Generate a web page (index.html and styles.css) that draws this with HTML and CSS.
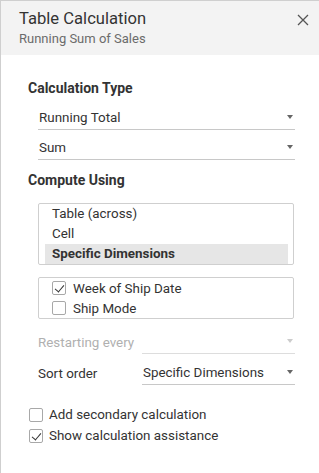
FILE: index.html
```html
<!DOCTYPE html>
<html lang="en">
<head>
    <meta charset="UTF-8">
    <meta name="viewport" content="width=device-width, initial-scale=1.0">
    <title>Table Calculation</title>
    <link rel="stylesheet" href="styles.css">
</head>
<body>
    <div class="panel">
        <div class="header">
            <div class="titles">
                <div class="title">Table Calculation</div>
                <div class="subtitle">Running Sum of Sales</div>
            </div>
            <svg class="close" width="12" height="12" viewBox="0 0 12 12">
                <path d="M1 1 L11 11 M11 1 L1 11" stroke="#555" stroke-width="1.3" fill="none"/>
            </svg>
        </div>

        <div class="body">
            <div class="section-title">Calculation Type</div>
            <div class="select">
                <span>Running Total</span><span class="caret"></span>
            </div>
            <div class="select">
                <span>Sum</span><span class="caret"></span>
            </div>

            <div class="section-title compute">Compute Using</div>
            <ul class="listbox">
                <li>Table (across)</li>
                <li>Cell</li>
                <li class="selected">Specific Dimensions</li>
            </ul>

            <ul class="checklist">
                <li><span class="check on"></span>Week of Ship Date</li>
                <li><span class="check"></span>Ship Mode</li>
            </ul>

            <div class="field-row restart disabled">
                <div class="label">Restarting every</div>
                <div class="select">
                    <span></span><span class="caret"></span>
                </div>
            </div>
            <div class="field-row sort">
                <div class="label">Sort order</div>
                <div class="select">
                    <span>Specific Dimensions</span><span class="caret"></span>
                </div>
            </div>

            <div class="options">
                <div class="option"><span class="check"></span>Add secondary calculation</div>
                <div class="option"><span class="check on"></span>Show calculation assistance</div>
            </div>
        </div>
    </div>
</body>
</html>
```

FILE: styles.css
```css
* {
    box-sizing: border-box;
}
body {
    margin: 0;
    font-family: Roboto, "Liberation Sans", sans-serif;
    font-size: 13.4px;
    color: #333;
    background: #fff;
}
.panel {
    height: 473px;
    border-left: 1px solid #cfcfcf;
    border-top: 1px solid #cfcfcf;
}
.header {
    background-color: #f3f3f3;
    height: 54px;
    display: flex;
    justify-content: space-between;
    padding: 7px 10px 0 18px;
}
.title {
    font-size: 16.6px;
    line-height: 22px;
    color: #333;
}
.subtitle {
    font-size: 13px;
    line-height: 18px;
    color: #6b6b6b;
}
.close {
    margin-top: 6px;
}
.body {
    padding: 23px 24px 0 27px;
}
.section-title {
    font-size: 14px;
    font-weight: bold;
    line-height: 20px;
    margin-bottom: 2px;
}
.compute {
    margin-top: 10px;
}
.select {
    display: flex;
    justify-content: space-between;
    align-items: center;
    margin-left: 10px;
    height: 30px;
    padding: 5px 1px 0 1px;
    border-bottom: 1px solid #c8c8c8;
}
.caret {
    width: 0;
    height: 0;
    border-left: 3.5px solid transparent;
    border-right: 3.5px solid transparent;
    border-top: 4px solid #666;
    margin-right: 1px;
}
ul {
    list-style: none;
    margin: 0;
    padding: 0;
}
.listbox {
    margin: 13px 1px 0 10px;
    border: 1px solid #cfcfcf;
    border-radius: 2px;
    padding: 0 5px 0 6px;
}
.listbox li {
    height: 20px;
    line-height: 20px;
    padding-left: 7px;
}
.listbox .selected {
    background-color: #e6e6e6;
    font-weight: bold;
}
.checklist {
    margin: 12px 1px 0 10px;
    border: 1px solid #cfcfcf;
    border-radius: 2px;
    padding-left: 13px;
}
.checklist li {
    display: flex;
    align-items: center;
    height: 20px;
}
.check {
    width: 14px;
    height: 14px;
    border: 1px solid #a8a8a8;
    border-radius: 2px;
    margin-right: 7px;
    background: #fff;
    position: relative;
    flex-shrink: 0;
}
.check.on::after {
    content: "";
    position: absolute;
    left: 4px;
    top: 1px;
    width: 4px;
    height: 8px;
    border-right: 1.5px solid #333;
    border-bottom: 1.5px solid #333;
    transform: rotate(40deg);
}
.field-row {
    display: flex;
    margin-left: 10px;
}
.restart {
    margin-top: 5px;
}
.sort {
    margin-top: 1px;
}
.field-row .label {
    width: 104px;
    padding-top: 9px;
    line-height: 20px;
}
.field-row .select {
    margin-left: 0;
    flex: 1;
}
.disabled .label {
    color: #b0b0b0;
}
.disabled .caret {
    border-top-color: #ccc;
}
.disabled .select {
    border-bottom-color: #ddd;
}
.options {
    margin: 19px 0 0 1px;
}
.option {
    display: flex;
    align-items: center;
    height: 21px;
}
.option .check {
    margin-right: 6px;
}
```
